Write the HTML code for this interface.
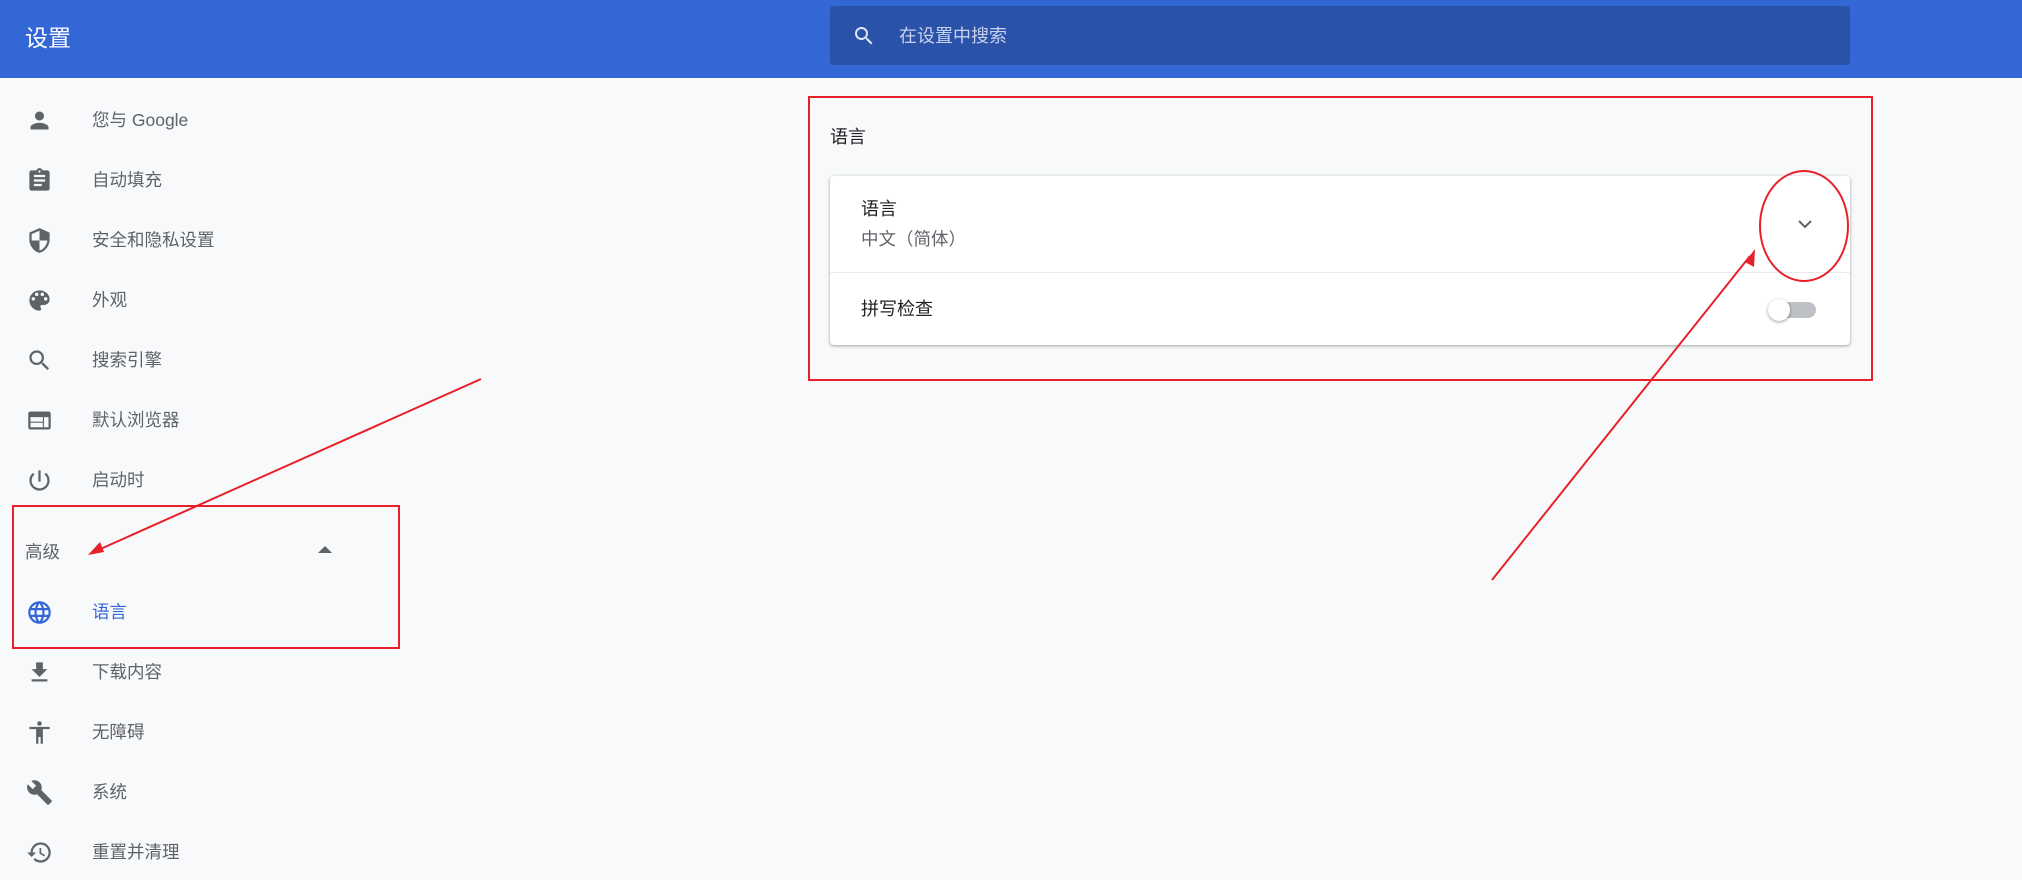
<!DOCTYPE html>
<html><head><meta charset="utf-8"><style>
*{margin:0;padding:0;box-sizing:border-box}
body{width:2022px;height:880px;background:#f8f9fa;font-family:"Liberation Sans","Noto Sans CJK SC",sans-serif;position:relative;overflow:hidden;color:#5f6368}
.hdr{position:absolute;left:0;top:0;width:2022px;height:78px;background:#3367d6}
.ttl{position:absolute;left:25px;top:24px;font-size:23px;color:#fff;line-height:28px}
.search{position:absolute;left:830px;top:6px;width:1020px;height:59px;background:#2a52a8;border-radius:3px}
.search span{position:absolute;left:69px;top:19px;font-size:18px;color:#c6d2ee;line-height:22px}
.it{position:absolute;left:0;width:400px;height:40px}
.it svg{position:absolute;left:26px;top:7px;width:27px;height:27px;fill:#5f6368}
.it span{position:absolute;left:92px;top:9px;font-size:17.5px;line-height:22px}
.abs{position:absolute}
.card{position:absolute;left:830px;top:176px;width:1020px;height:169px;background:#fff;border-radius:4px;box-shadow:0 1px 2px rgba(60,64,67,.3),0 1px 3px 1px rgba(60,64,67,.15)}
</style></head><body>
<div class="hdr"></div>
<div class="ttl">设置</div>
<div class="search">
<svg class="abs" style="left:22px;top:18px" width="24" height="24" viewBox="0 0 24 24"><path fill="#dfe6f7" d="M15.5 14h-.79l-.28-.27A6.470 6.470 0 0016 9.5 6.5 6.5 0 109.5 16c1.61 0 3.090-.59 4.230-1.57l.27.28v.79l5 4.99L20.49 19l-4.99-5zm-6 0C7.01 14 5 11.99 5 9.5S7.01 5 9.5 5 14 7.01 14 9.5 11.99 14 9.5 14z"/></svg>
<span>在设置中搜索</span></div>

<div class="it" style="top:100px"><svg viewBox="0 0 24 24"><path d="M12 12c2.21 0 4-1.79 4-4s-1.79-4-4-4-4 1.79-4 4 1.79 4 4 4zm0 2c-2.67 0-8 1.34-8 4v2h16v-2c0-2.66-5.33-4-8-4z"/></svg><span>您与 Google</span></div>
<div class="it" style="top:160px"><svg viewBox="0 0 24 24"><path d="M19 3h-4.18C14.4 1.84 13.3 1 12 1s-2.4.84-2.82 2H5c-1.1 0-2 .9-2 2v14c0 1.1.9 2 2 2h14c1.1 0 2-.9 2-2V5c0-1.1-.9-2-2-2zm-7 0c.55 0 1 .45 1 1s-.45 1-1 1-1-.45-1-1 .45-1 1-1zm2 14H7v-2h7v2zm3-4H7v-2h10v2zm0-4H7V7h10v2z"/></svg><span>自动填充</span></div>
<div class="it" style="top:220px"><svg viewBox="0 0 24 24"><path d="M12 1L3 5v6c0 5.55 3.84 10.74 9 12 5.16-1.26 9-6.45 9-12V5l-9-4zm0 10.99h7c-.53 4.12-3.28 7.79-7 8.94V12H5V6.3l7-3.11v8.8z"/></svg><span>安全和隐私设置</span></div>
<div class="it" style="top:280px"><svg viewBox="0 0 24 24"><path d="M12 3a9 9 0 000 18c.83 0 1.5-.67 1.5-1.5 0-.39-.15-.74-.39-1.01-.23-.26-.38-.61-.38-.99 0-.83.67-1.5 1.5-1.5H16c2.76 0 5-2.24 5-5 0-4.42-4.03-8-9-8zm-5.5 9a1.5 1.5 0 110-3 1.5 1.5 0 010 3zm3-4a1.5 1.5 0 110-3 1.5 1.5 0 010 3zm5 0a1.5 1.5 0 110-3 1.5 1.5 0 010 3zm3 4a1.5 1.5 0 110-3 1.5 1.5 0 010 3z"/></svg><span>外观</span></div>
<div class="it" style="top:340px"><svg viewBox="0 0 24 24"><path d="M15.5 14h-.79l-.28-.27A6.47 6.47 0 0016 9.5 6.5 6.5 0 109.5 16c1.61 0 3.09-.59 4.23-1.57l.27.28v.79l5 4.99L20.49 19l-4.99-5zm-6 0C7.01 14 5 11.99 5 9.5S7.01 5 9.5 5 14 7.01 14 9.5 11.99 14 9.5 14z"/></svg><span>搜索引擎</span></div>
<div class="it" style="top:400px"><svg viewBox="0 0 24 24"><path d="M20 4H4c-1.1 0-2 .9-2 2v12c0 1.1.9 2 2 2h16c1.1 0 2-.9 2-2V6c0-1.1-.9-2-2-2zm-5 14H4v-4h11v4zm0-5H4V9h11v4zm5 5h-4V9h4v9z"/></svg><span>默认浏览器</span></div>
<div class="it" style="top:460px"><svg viewBox="0 0 24 24"><path d="M13 3h-2v10h2V3zm4.83 2.17l-1.42 1.42A6.92 6.92 0 0119 12c0 3.87-3.13 7-7 7A6.995 6.995 0 017.58 6.58L6.17 5.17A8.93 8.93 0 003 12a9 9 0 0018 0c0-2.74-1.23-5.18-3.17-6.83z"/></svg><span>启动时</span></div>

<div class="abs" style="left:25px;top:541px;font-size:17.5px;line-height:22px">高级</div>
<svg class="abs" style="left:318px;top:546px" width="14" height="8"><path d="M0 7L7 0L14 7z" fill="#5f6368"/></svg>

<div class="it" style="top:592px"><svg viewBox="0 0 24 24" style="fill:#3367d6"><path d="M11.99 2C6.47 2 2 6.48 2 12s4.47 10 9.99 10C17.52 22 22 17.52 22 12S17.52 2 11.99 2zm6.93 6h-2.95a15.65 15.65 0 00-1.38-3.56A8.03 8.03 0 0118.92 8zM12 4.04c.83 1.2 1.48 2.53 1.91 3.96h-3.82c.43-1.43 1.08-2.76 1.910-3.96zM4.26 14C4.1 13.36 4 12.69 4 12s.1-1.36.26-2h3.38c-.08.66-.14 1.32-.14 2 0 .68.06 1.34.14 2H4.26zm.82 2h2.95c.32 1.25.78 2.45 1.38 3.56A7.99 7.99 0 015.08 16zm2.95-8H5.08a7.99 7.99 0 014.33-3.56A15.65 15.65 0 008.03 8zM12 19.96c-.83-1.2-1.48-2.53-1.91-3.96h3.82c-.43 1.43-1.08 2.76-1.91 3.96zM14.34 14H9.66c-.09-.66-.16-1.32-.16-2 0-.68.07-1.35.16-2h4.68c.09.65.16 1.32.16 2 0 .68-.07 1.34-.16 2zm.25 5.56c.6-1.11 1.06-2.31 1.38-3.56h2.95a8.03 8.03 0 01-4.33 3.56zM16.36 14c.08-.66.14-1.32.14-2 0-.68-.06-1.34-.14-2h3.38c.16.64.26 1.31.26 2s-.1 1.36-.26 2h-3.38z"/></svg><span style="color:#3367d6">语言</span></div>
<div class="it" style="top:652px"><svg viewBox="0 0 24 24"><path d="M19 9h-4V3H9v6H5l7 7 7-7zM5 18v2h14v-2H5z"/></svg><span>下载内容</span></div>
<div class="it" style="top:712px"><svg viewBox="0 0 24 24"><path d="M12 2c1.1 0 2 .9 2 2s-.9 2-2 2-2-.9-2-2 .9-2 2-2zm9 7h-6v13h-2v-6h-2v6H9V9H3V7h18v2z"/></svg><span>无障碍</span></div>
<div class="it" style="top:772px"><svg viewBox="0 0 24 24"><path d="M22.7 19l-9.1-9.1c.9-2.3.4-5-1.5-6.9-2-2-5-2.4-7.4-1.3L9 6 6 9 1.6 4.7C.4 7.1.9 10.1 2.9 12.1c1.9 1.9 4.6 2.4 6.9 1.5l9.1 9.1c.4.4 1 .4 1.4 0l2.3-2.3c.5-.4.5-1.1.1-1.4z"/></svg><span>系统</span></div>
<div class="it" style="top:832px"><svg viewBox="0 0 24 24"><path d="M13 3a9 9 0 00-9 9H1l3.89 3.89.07.14L9 12H6c0-3.87 3.13-7 7-7s7 3.13 7 7-3.13 7-7 7c-1.93 0-3.68-.79-4.94-2.06l-1.42 1.42A8.954 8.954 0 0013 21a9 9 0 000-18zm-1 5v5l4.28 2.54.72-1.21-3.5-2.08V8H12z"/></svg><span>重置并清理</span></div>

<div class="abs" style="left:830px;top:126px;font-size:18px;line-height:22px;color:#202124">语言</div>
<div class="card">
<div class="abs" style="left:31px;top:22px;font-size:18px;line-height:22px;color:#202124">语言</div>
<div class="abs" style="left:31px;top:52px;font-size:17.5px;line-height:22px;color:#5f6368">中文（简体）</div>
<svg class="abs" style="left:967px;top:42px" width="16" height="12"><path d="M2 3l6 6 6-6" stroke="#5f6368" stroke-width="2" fill="none"/></svg>
<div class="abs" style="left:0;top:96px;width:1020px;height:1px;background:#e8eaed"></div>
<div class="abs" style="left:31px;top:122px;font-size:18px;line-height:22px;color:#202124">拼写检查</div>
<div class="abs" style="left:950px;top:126px;width:36px;height:16px;border-radius:8px;background:#bdc1c6"></div>
<div class="abs" style="left:938px;top:123px;width:22px;height:22px;border-radius:50%;background:#fff;box-shadow:0 1px 3px rgba(0,0,0,.4)"></div>
</div>

<svg class="abs" style="left:0;top:0" width="2022" height="880">
<g fill="none" stroke="#e8202a" stroke-width="2">
<rect x="809" y="97" width="1063" height="283"/>
<rect x="13" y="506" width="386" height="142"/>
<ellipse cx="1804" cy="226" rx="44" ry="55"/>
<line x1="481" y1="379" x2="96" y2="551"/>
<line x1="1492" y1="580" x2="1750" y2="256"/>
</g>
<path d="M88 555 L100 542 L104 552Z" fill="#e8202a"/>
<path d="M1755 249 L1745 262 L1754 267Z" fill="#e8202a"/>
</svg>
</body></html>
